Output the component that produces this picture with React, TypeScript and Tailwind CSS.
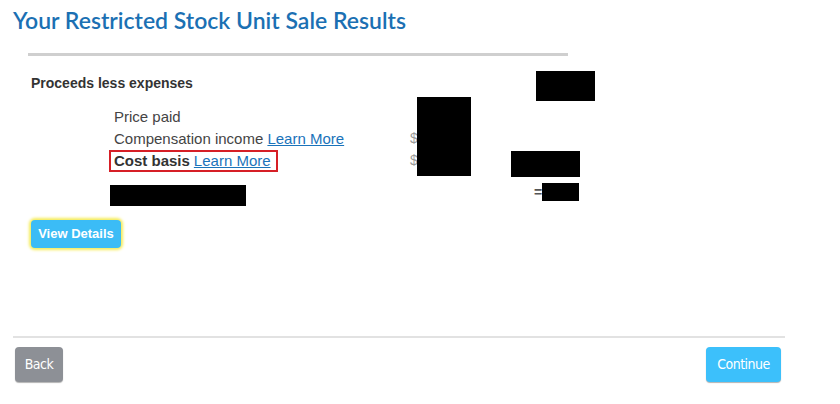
export default function App() {
  return (
    <div className="w-[840px] h-[404px] bg-white font-['Liberation_Sans',Arial,sans-serif] text-[#444] relative overflow-hidden">
      {/* Header */}
      <h1 className="pl-[13px] pt-[6px] text-[23px] leading-[28px] font-semibold text-[#1b70b3] font-['Lato',sans-serif]">
        Your Restricted Stock Unit Sale Results
      </h1>
      <div className="ml-[28px] mt-[19px] w-[540px] h-[3px] bg-[#cfcfcf]" />

      {/* Proceeds (values redacted) */}
      <div className="relative">
        <p className="pl-[31px] pt-[19px] text-[14px] leading-[16px] font-bold text-[#333]">
          Proceeds less expenses
        </p>
        <div className="pl-[114px] pt-[15px] text-[15px] leading-[22px]">
          <div>Price paid</div>
          <div>
            Compensation income <a className="text-[#1a73ba] underline">Learn More</a>
          </div>
          <div className="-ml-[5px] w-[169px] h-[22px] border-2 border-[#d61f26] pl-[3px] leading-[18px] flex items-center">
            <span className="font-bold text-[#333]">Cost basis</span>
            <a className="ml-[4px] text-[#1a73ba] underline">Learn More</a>
          </div>
        </div>

        <span className="absolute left-[410px] top-[72px] text-[14px] text-[#999]">$</span>
        <span className="absolute left-[410px] top-[94px] text-[14px] text-[#999]">$</span>
        <div className="absolute left-[536px] top-[15px] w-[59px] h-[30px] bg-black" />
        <div className="absolute left-[417px] top-[41px] w-[54px] h-[79px] bg-black" />
        <div className="absolute left-[511px] top-[95px] w-[69px] h-[26px] bg-black" />
        <span className="absolute left-[534px] top-[126px] text-[14px] font-bold text-[#555]">=</span>
        <div className="absolute left-[542px] top-[127px] w-[37px] h-[18px] bg-black" />
        <div className="absolute left-[110px] top-[129px] w-[136px] h-[21px] bg-black" />
      </div>

      <div className="pl-[31px] pt-[48px]">
        <button className="w-[90px] h-[28px] rounded-[4px] bg-[#3bbcf6] text-white text-[13px] font-bold shadow-[0_0_3px_2px_#f5ec5a]">
          View Details
        </button>
      </div>

      {/* Footer */}
      <div className="ml-[13px] mt-[88px] w-[772px] h-[2px] bg-[#e2e2e2]" />
      <div className="flex justify-between pl-[15px] pr-[59px] pt-[9px]">
        <button className="w-[48px] h-[35px] rounded-[4px] bg-[#8d9096] text-white text-[14px] tracking-[-0.5px] font-['DejaVu_Sans_Condensed','Liberation_Sans_Narrow',sans-serif] shadow-[0_1px_1px_rgba(0,0,0,0.3)]">
          Back
        </button>
        <button className="w-[75px] h-[35px] rounded-[4px] bg-[#3cc0fb] text-white text-[14px] tracking-[-0.5px] font-['DejaVu_Sans_Condensed','Liberation_Sans_Narrow',sans-serif] shadow-[0_1px_1px_rgba(0,0,0,0.3)]">
          Continue
        </button>
      </div>
    </div>
  )
}
